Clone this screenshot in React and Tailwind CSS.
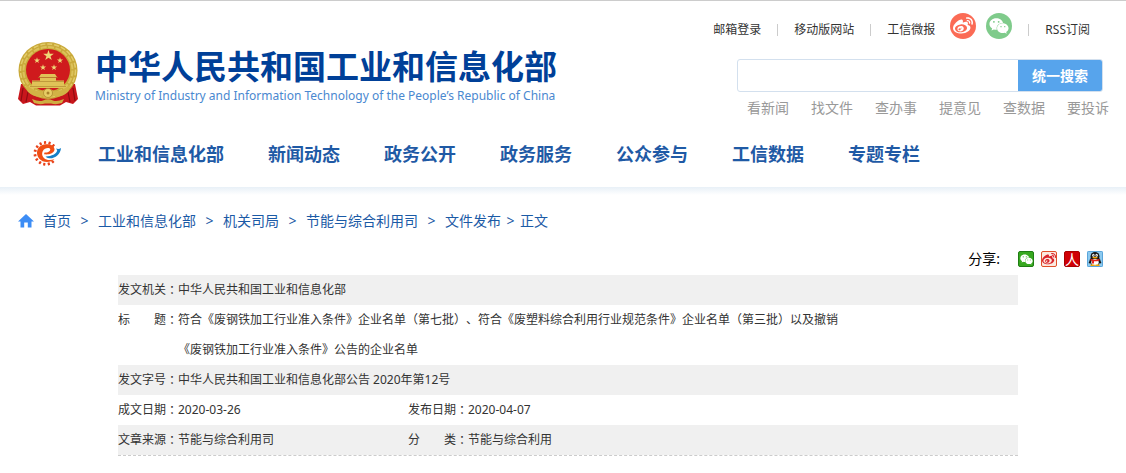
import { Fragment } from "react";
import { FaWeibo, FaWeixin } from "react-icons/fa";

const NAV_ITEMS = ["工业和信息化部", "新闻动态", "政务公开", "政务服务", "公众参与", "工信数据", "专题专栏"];
const HOT_LINKS = ["看新闻", "找文件", "查办事", "提意见", "查数据", "要投诉"];
const CRUMBS = ["首页", "工业和信息化部", "机关司局", "节能与综合利用司", "文件发布"];

const STAR = "M0 -1 L.23 -.31 .95 -.31 .36 .12 .59 .81 0 .38 -.59 .81 -.36 .12 -.95 -.31 -.23 -.31Z";
const TEETH = [50, 74, 98, 122, 146, 170, 194, 218, 242, 266, 290, 314];

function Emblem() {
  return (
    <svg viewBox="0 0 60 64" className="w-[60px] h-16 shrink-0" role="img" aria-label="国徽">
      <path d="M3 42 L0 57 5 62 12 60 18 63.500 H42 L48 60 55 62 60 57 57 42Z" fill="#c8161c" />
      <path d="M5 46 L3 59 M10 50 L8 60 M50 50 L52 60 M55 46 L57 59" stroke="#8f0c12" strokeWidth="1.2" />
      <ellipse cx="30" cy="28.500" rx="29.500" ry="28.500" fill="#c9a93a" />
      <ellipse cx="30" cy="28.500" rx="27.500" ry="26.500" fill="none" stroke="#e3cd6c" strokeWidth="1.500" strokeDasharray="5 2" />
      <ellipse cx="30" cy="28.500" rx="24.500" ry="23.500" fill="none" stroke="#dcc25a" strokeWidth="2" strokeDasharray="6 1.500" />
      <ellipse cx="30" cy="28" rx="22" ry="21" fill="#cf1a1d" />
      <g fill="#efd778">
        <path d={STAR} transform="translate(30.500 13.500) scale(5.600)" />
        <path d={STAR} transform="translate(19 18.500) scale(3.200)" />
        <path d={STAR} transform="translate(42 18.500) scale(3.200)" />
        <path d={STAR} transform="translate(25 25.500) scale(3.200)" />
        <path d={STAR} transform="translate(36 25.500) scale(3.200)" />
      </g>
      <path d="M23 32 H37 L39 35 H21Z M22 35.500 H38 V38.500 H22Z M14 38.500 H46 V43.500 H49 L50 46 H10 L11 43.500 H14Z" fill="#e0c257" />
      <path d="M20 35.500 H40 M14 39.500 H46 M12 44.500 H48" stroke="#a8822a" strokeWidth=".6" />
      <path d="M7 42 Q18 51 24 49 Q30 45 36 49 Q42 51 53 42 L50 50 Q43 56 36 54 Q30 58 24 54 Q17 56 10 50Z" fill="#d2b245" />
      <circle cx="30" cy="51" r="4.500" fill="#e6cc63" stroke="#a8822a" strokeWidth=".7" />
      <circle cx="30" cy="51" r="1.500" fill="#a8822a" />
      <path d="M14 57 Q21 60 25 58.500 Q30 56 35 58.500 Q39 60 46 57 L44 61 Q38 63 33 61.500 H27 Q22 63 16 61Z" fill="#cfae42" />
    </svg>
  );
}

function GearLogo() {
  return (
    <svg viewBox="0 0 28 25" className="w-7 h-[25px] shrink-0" aria-hidden="true">
      <g fill="#e8431c">
        {TEETH.map((angle) => (
          <rect key={angle} x="22.300" y="11.300" width="2.800" height="2.200" rx=".4" transform={`rotate(${angle} 12.800 12.400)`} />
        ))}
      </g>
      <path
        d="M21.500 18 C18 21.500 10.500 22.600 6 17.500 C1.800 12 4.500 5 11 3.600 C16.500 2.600 21.500 4.500 21.500 8.500 C21 12.300 16 14 11 13.300 L11.500 11.600 C14.500 11.800 17.300 10.500 17.300 8.500 C16.800 6.300 11.500 6.500 9.600 10.500 C8 14.500 10.800 18.300 15 19 C17.500 19.300 19.500 19 21.500 18Z"
        fill="#f04e14"
      />
      <path d="M12.500 15.400 C18 15.600 23.800 13 24.200 9.300 L23 7.600 Q26 8.600 28 7 C27.500 13.500 21.500 18 16 17.300 Q13.800 16.900 12.500 15.400Z" fill="#1480c8" />
    </svg>
  );
}

function HomeIcon() {
  return (
    <svg viewBox="0 0 16 14" className="w-4 h-3.5 shrink-0" aria-hidden="true">
      <path d="M8 0 L16 7.500 H13.500 V13.500 H9.800 V8.500 H6.200 V13.500 H2.500 V7.500 H0Z" fill="#3d8df5" />
    </svg>
  );
}

function PenguinIcon() {
  return (
    <svg viewBox="0 0 16 16" className="w-4 h-4" aria-hidden="true">
      <rect width="16" height="16" rx="1.500" fill="#8ccaf0" />
      <rect x=".5" y=".5" width="15" height="15" rx="1" fill="none" stroke="#5aa5da" />
      <ellipse cx="8" cy="10" rx="5.500" ry="4.500" fill="#161616" />
      <ellipse cx="8" cy="5.500" rx="4.500" ry="4.500" fill="#161616" />
      <path d="M3.500 8.500 L1.500 12 3 12.500Z M12.500 8.500 L14.500 12 13 12.500Z" fill="#161616" />
      <ellipse cx="8" cy="11.300" rx="3.700" ry="3.200" fill="#fff" />
      <ellipse cx="6.400" cy="4.200" rx="1.200" ry="1.500" fill="#fff" />
      <ellipse cx="9.600" cy="4.200" rx="1.200" ry="1.500" fill="#fff" />
      <circle cx="6.800" cy="4.300" r=".5" fill="#161616" />
      <circle cx="9.200" cy="4.300" r=".5" fill="#161616" />
      <ellipse cx="8" cy="6.600" rx="2.700" ry=".9" fill="#f6a500" />
      <path d="M3.500 7.800 Q8 9.800 12.500 7.800 V9.400 Q8 11.200 3.500 9.400Z M5 9.500 H7 V12.500 H5Z" fill="#e3231b" />
      <path d="M3.500 13.500 H7.500 V15 H3.500Z M8.500 13.500 H12.500 V15 H8.500Z" fill="#f6a500" />
    </svg>
  );
}

function Divider() {
  return <span className="w-px h-3 mx-4 bg-[#ccc]" />;
}

function Header() {
  return (
    <header className="border-t border-[#ccc]">
      <div className="pl-2.5">
        <div className="max-w-[1100px] mx-auto flex justify-between">
          <a href="#" className="flex gap-[17px] pt-[41px]">
            <Emblem />
            <span className="flex flex-col whitespace-nowrap font-['Noto_Sans_CJK_SC',sans-serif]">
              <span className="text-[33px] leading-[46px] font-bold text-[#004098]">中华人民共和国工业和信息化部</span>
              <span className="text-xs leading-4 text-[#4a88d0] font-['Noto_Sans',sans-serif]" lang="en">
                Ministry of Industry and Information Technology of the People’s Republic of China
              </span>
            </span>
          </a>

          <div className="flex flex-col items-end pt-[13px] whitespace-nowrap">
            <div className="flex items-center h-8 pr-7 text-xs text-[#333]">
              <a href="#">邮箱登录</a>
              <Divider />
              <a href="#">移动版网站</a>
              <Divider />
              <a href="#">工信微报</a>
              <a href="#" aria-label="微博" className="ml-[15px] mb-2 w-[26px] h-[26px] rounded-full bg-[#fb6b55] text-white flex items-center justify-center">
                <FaWeibo size={20} />
              </a>
              <a href="#" aria-label="微信" className="ml-2.5 mb-2 w-[26px] h-[26px] rounded-full bg-[#7fcb8b] text-white flex items-center justify-center">
                <FaWeixin size={20} />
              </a>
              <Divider />
              <a href="#">RSS订阅</a>
            </div>

            <form className="flex w-[366px] h-[33px] mt-[13px] mr-[15px] border border-[#d3e0ee] rounded-[3px] overflow-hidden">
              <input type="text" aria-label="搜索" className="flex-1 min-w-0 px-2 text-sm outline-none" />
              <button type="button" className="w-[84px] bg-[#57a4ec] text-white text-sm font-bold">
                统一搜索
              </button>
            </form>

            <div className="flex gap-[22px] mt-1.5 pr-[9px] text-sm text-[#999]">
              {HOT_LINKS.map((item) => (
                <a key={item} href="#">{item}</a>
              ))}
            </div>
          </div>
        </div>

        <nav className="max-w-[1100px] mx-auto flex items-center h-[69px] pt-0.5 pl-[15px]">
          <GearLogo />
          <div className="flex gap-11 ml-[37px] text-lg font-bold text-[#1f5aa5] whitespace-nowrap">
            {NAV_ITEMS.map((item) => (
              <a key={item} href="#">{item}</a>
            ))}
          </div>
        </nav>
      </div>
      <div className="h-2 bg-linear-to-b from-[#e8f0f7] to-white" />
    </header>
  );
}

function Breadcrumb() {
  return (
    <div className="flex items-center h-5 mt-4 text-sm text-[#1b5aa6] whitespace-nowrap">
      <HomeIcon />
      <span className="w-[9px]" />
      {CRUMBS.map((item, i) => (
        <Fragment key={item}>
          <a href="#">{item}</a>
          <span className={i < CRUMBS.length - 1 ? "w-[27px] text-center" : "w-[19px] text-center"}>&gt;</span>
        </Fragment>
      ))}
      <span>正文</span>
    </div>
  );
}

function ShareBar() {
  return (
    <div className="flex items-center justify-end h-5 mt-[18px] pr-[15px] gap-[7px]">
      <span className="text-sm text-black mr-[11px]">分享:</span>
      <a href="#" aria-label="微信" className="w-4 h-4 rounded-[2px] border border-[#1f7d14] bg-[#37a81f] text-white flex items-center justify-center">
        <FaWeixin size={13} />
      </a>
      <a href="#" aria-label="微博" className="w-4 h-4 rounded-[2px] border border-[#e0502a] bg-[#fbe9df] text-[#d9232b] flex items-center justify-center">
        <FaWeibo size={14} />
      </a>
      <a href="#" aria-label="人民网" className="w-4 h-4 rounded-[2px] border border-[#a80000] bg-[#d00005] text-white text-sm leading-3 flex items-center justify-center font-['Noto_Sans_CJK_SC',sans-serif]">
        人
      </a>
      <a href="#" aria-label="QQ">
        <PenguinIcon />
      </a>
    </div>
  );
}

function Label({ children }) {
  return (
    <th scope="row" className="p-0 font-normal align-top">
      <span className="flex">
        <span className="flex justify-between w-12">
          {children.split("").map((char) => (
            <span key={char}>{char}</span>
          ))}
        </span>
        <span className="font-['Noto_Sans_CJK_TC',sans-serif]" lang="zh-TW">：</span>
      </span>
    </th>
  );
}

function InfoTable() {
  return (
    <div className="max-w-[900px] mx-auto mt-1.5 border-b border-dashed border-[#ccc]">
      <table className="w-full table-fixed border-collapse text-left text-xs leading-[30px] text-[#333] [text-spacing-trim:space-all]">
        <colgroup>
          <col className="w-[60px]" />
          <col className="w-[230px]" />
          <col className="w-[60px]" />
          <col />
        </colgroup>
        <tbody>
          <tr className="bg-[#f0f0f0]">
            <Label>发文机关</Label>
            <td colSpan={3} className="p-0">中华人民共和国工业和信息化部</td>
          </tr>
          <tr>
            <Label>标题</Label>
            <td colSpan={3} className="p-0">
              符合《废钢铁加工行业准入条件》企业名单（第七批）、符合《废塑料综合利用行业规范条件》企业名单（第三批）以及撤销
              <br />
              《废钢铁加工行业准入条件》公告的企业名单
            </td>
          </tr>
          <tr className="bg-[#f0f0f0]">
            <Label>发文字号</Label>
            <td colSpan={3} className="p-0">中华人民共和国工业和信息化部公告 2020年第12号</td>
          </tr>
          <tr>
            <Label>成文日期</Label>
            <td className="p-0">2020-03-26</td>
            <Label>发布日期</Label>
            <td className="p-0">2020-04-07</td>
          </tr>
          <tr className="bg-[#f0f0f0]">
            <Label>文章来源</Label>
            <td className="p-0">节能与综合利用司</td>
            <Label>分类</Label>
            <td className="p-0">节能与综合利用</td>
          </tr>
        </tbody>
      </table>
    </div>
  );
}

export default function App() {
  return (
    <div lang="zh-CN" className="bg-white font-['Noto_Sans','Noto_Sans_CJK_SC',sans-serif]">
      <Header />
      <main className="pl-2.5">
        <div className="max-w-[1100px] mx-auto">
          <Breadcrumb />
          <ShareBar />
          <InfoTable />
        </div>
      </main>
    </div>
  );
}
